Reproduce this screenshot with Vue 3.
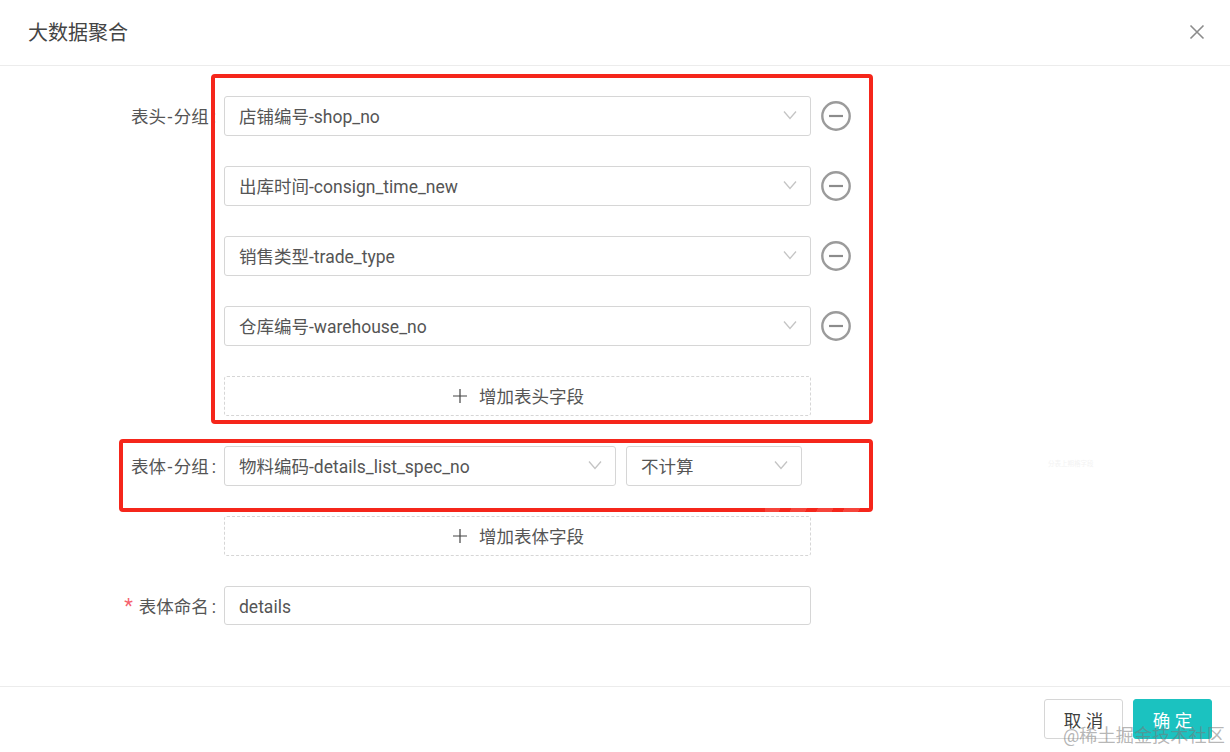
<script setup>
const headFields = [
  '店铺编号-shop_no',
  '出库时间-consign_time_new',
  '销售类型-trade_type',
  '仓库编号-warehouse_no'
]
</script>

<template>
  <div class="dialog">
    <header class="head">
      <h1 class="title">大数据聚合</h1>
      <svg class="close" width="16" height="16" viewBox="0 0 16 16" aria-label="关闭">
        <path d="M1.5 1.5 L14.5 14.5 M14.5 1.5 L1.5 14.5" stroke="#8c8c8c" stroke-width="1.6" fill="none" />
      </svg>
    </header>

    <main class="body">
      <div v-for="(field, i) in headFields" :key="field" class="row">
        <label class="label"><span v-if="i === 0">表头<span class="hy">-</span>分组<b class="colon">:</b></span></label>
        <div class="select grow">
          <span>{{ field }}</span>
          <svg class="chev" width="14" height="10" viewBox="0 0 14 10"><path d="M1 1.5 L7 8.5 L13 1.5" fill="none" stroke="#c4c4c4" stroke-width="1.3" /></svg>
        </div>
        <svg class="minus" width="30" height="30" viewBox="0 0 30 30">
          <circle cx="15" cy="15" r="13.7" fill="none" stroke="#9b9b9b" stroke-width="2.4" />
          <path d="M8 15 H22" stroke="#8c8c8c" stroke-width="2.2" />
        </svg>
      </div>

      <div class="row">
        <label class="label"></label>
        <button class="add">
          <svg width="14" height="14" viewBox="0 0 14 14"><path d="M7 0 V14 M0 7 H14" stroke="#444" stroke-width="1.2" /></svg>
          <span>增加表头字段</span>
        </button>
      </div>

      <div class="row">
        <label class="label"><span>表体<span class="hy">-</span>分组<b class="colon">:</b></span></label>
        <div class="select wide">
          <span>物料编码-details_list_spec_no</span>
          <svg class="chev" width="14" height="10" viewBox="0 0 14 10"><path d="M1 1.5 L7 8.5 L13 1.5" fill="none" stroke="#c4c4c4" stroke-width="1.3" /></svg>
        </div>
        <div class="select narrow">
          <span>不计算</span>
          <svg class="chev" width="14" height="10" viewBox="0 0 14 10"><path d="M1 1.5 L7 8.5 L13 1.5" fill="none" stroke="#c4c4c4" stroke-width="1.3" /></svg>
        </div>
      </div>

      <div class="row">
        <label class="label"></label>
        <button class="add">
          <svg width="14" height="14" viewBox="0 0 14 14"><path d="M7 0 V14 M0 7 H14" stroke="#444" stroke-width="1.2" /></svg>
          <span>增加表体字段</span>
        </button>
      </div>

      <div class="row">
        <label class="label"><i class="star">*</i><span>表体命名<b class="colon">:</b></span></label>
        <div class="select grow input"><span>details</span></div>
      </div>
    </main>

    <footer class="foot">
      <button class="btn">取 消</button>
      <button class="btn primary">确 定</button>
    </footer>

    <div class="mark box-a"></div>
    <div class="mark box-b"></div>
    <div class="wash"></div>
    <div class="ghost">分表上期格字段</div>
    <div class="stamp">@稀土掘金技术社区</div>
  </div>
</template>

<style>
html, body { margin: 0; background: #fff; }
</style>

<style scoped>
.dialog {
  position: relative;
  width: 1230px;
  height: 752px;
  overflow: hidden;
  display: flex;
  flex-direction: column;
  background: #fff;
  color: #555;
  font-family: Roboto, "Noto Sans CJK SC", sans-serif;
  font-size: 17.5px;
}
.head {
  height: 66px;
  flex: none;
  box-sizing: border-box;
  border-bottom: 1px solid #ececec;
  display: flex;
  align-items: center;
  justify-content: space-between;
  padding: 0 25px 2px 28px;
}
.title {
  margin: 0;
  font-size: 20px;
  font-weight: 400;
  color: #444;
}
.body {
  flex: 1;
  padding-top: 30px;
}
.row {
  display: flex;
  align-items: center;
  height: 40px;
  margin-bottom: 30px;
}
.label {
  width: 224px;
  flex: none;
  padding: 0 8px 2px 0;
  box-sizing: border-box;
  text-align: right;
  white-space: nowrap;
}
.hy {
  margin: 0 1.5px;
}
.colon {
  font-weight: 400;
  margin-left: 3px;
}
.star {
  color: #f5636f;
  font-style: normal;
  font-size: 20px;
  line-height: 1;
  margin-right: 6px;
}
.select {
  height: 40px;
  box-sizing: border-box;
  border: 1px solid #d6d6d6;
  border-radius: 3px;
  display: flex;
  align-items: center;
  justify-content: space-between;
  padding: 0 13.5px 1px 14px;
  white-space: nowrap;
}
.grow { width: 587px; }
.wide { width: 392px; margin-right: 10px; }
.narrow { width: 176px; }
.input {
  height: 39px;
  padding-top: 2px;
  padding-bottom: 0;
  align-self: flex-start;
  justify-content: flex-start;
}
.chev { margin-top: -2px; }
.minus { margin-left: 10px; flex: none; }
.add {
  width: 587px;
  height: 40px;
  border: 1px dashed #d6d6d6;
  border-radius: 3px;
  background: #fff;
  color: #555;
  font: inherit;
  display: flex;
  align-items: center;
  justify-content: center;
  gap: 12px;
  padding: 0 0 1px 2px;
}
.foot {
  height: 66px;
  flex: none;
  box-sizing: border-box;
  border-top: 1px solid #ececec;
  display: flex;
  justify-content: flex-end;
  gap: 10px;
  padding: 12px 18px 0 0;
}
.btn {
  width: 79px;
  height: 40px;
  border: 1px solid #d6d6d6;
  border-radius: 3px;
  background: #fff;
  color: #3f3f3f;
  font: inherit;
  padding: 0;
}
.primary {
  background: #1bc2c0;
  border-color: #1bc2c0;
  color: #fff;
}
.mark {
  position: absolute;
  box-sizing: border-box;
  border: 4px solid #f5261b;
  border-radius: 4px;
  pointer-events: none;
}
.box-a { left: 211px; top: 74px; width: 662px; height: 350px; }
.box-b { left: 119px; top: 439px; width: 754px; height: 73px; }
.wash {
  position: absolute;
  left: 765px;
  top: 508px;
  width: 100px;
  height: 4px;
  background: repeating-linear-gradient(115deg, rgba(255, 255, 255, 0.14) 0 14px, transparent 14px 24px);
}
.ghost {
  position: absolute;
  left: 1048px;
  top: 458px;
  font-size: 6.5px;
  color: #f3f3f3;
  white-space: nowrap;
}
.stamp {
  position: absolute;
  left: 1063px;
  top: 721px;
  font-size: 18.2px;
  color: rgba(120, 120, 120, 0.55);
  white-space: nowrap;
}
</style>
